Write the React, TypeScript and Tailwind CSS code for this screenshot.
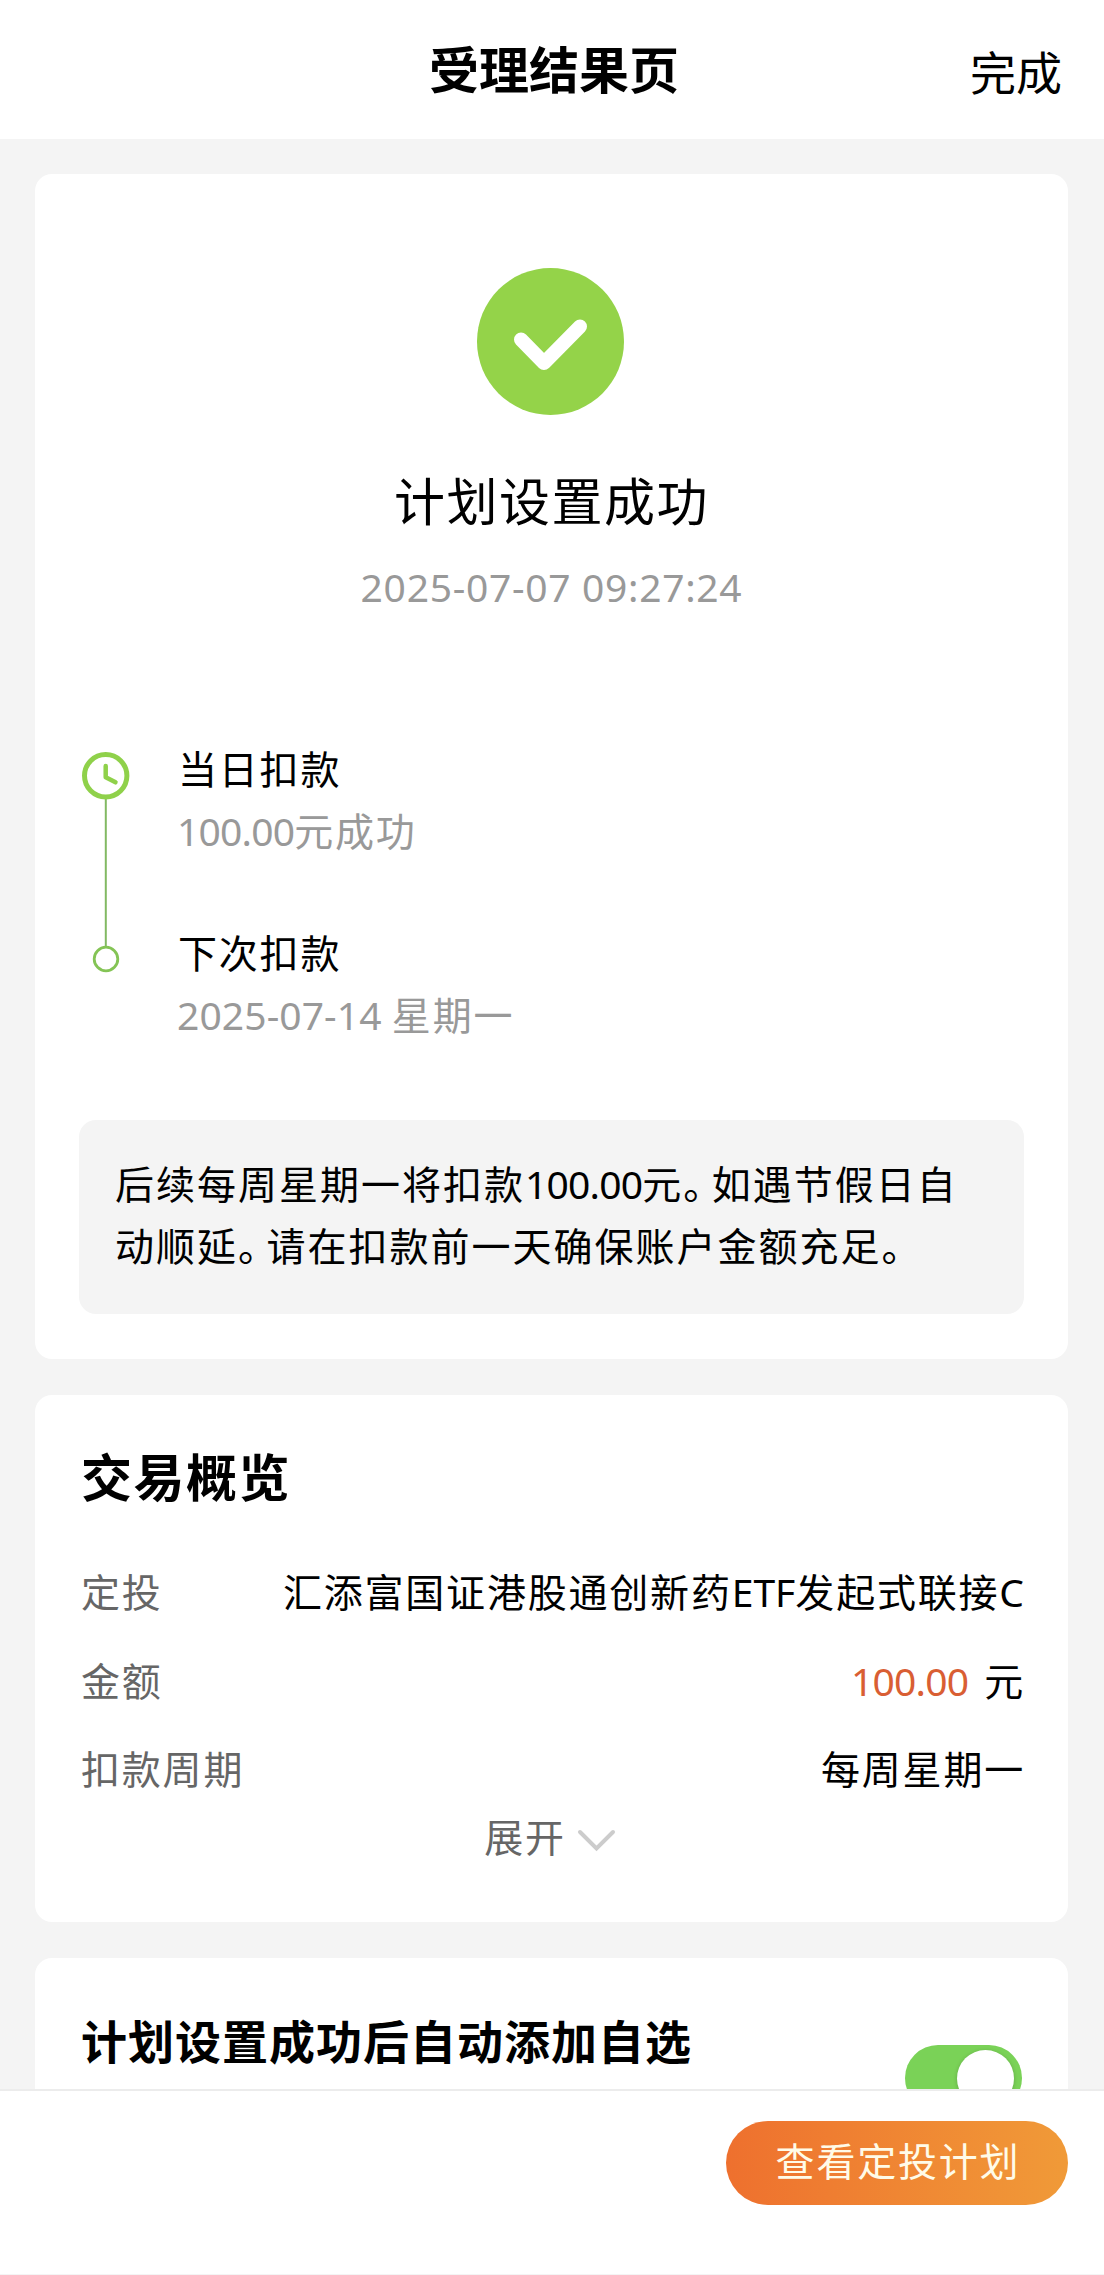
import type { ReactNode } from "react";

const STEPS = [
  { title: "当日扣款", value: "100.00", unit: "元成功", valueClass: "tracking-[-0.8px]" },
  { title: "下次扣款", value: "2025-07-14 ", unit: "星期一", valueClass: "tracking-[0.1px]" },
] as const;

function Card({ className, children }: { className: string; children: ReactNode }) {
  return <section className={`mx-[35px] w-[1033px] shrink-0 rounded-[17px] bg-white ${className}`}>{children}</section>;
}

function Row({ label, children }: { label: string; children: ReactNode }) {
  return (
    <div className="flex h-[88.5px] items-center justify-between whitespace-nowrap">
      <span className="text-[#666]">{label}</span>
      <span className="-mr-[3px]">{children}</span>
    </div>
  );
}

// Full stop set tighter than a full em
function Stop() {
  return <span className="tracking-[-10.5px]">。</span>;
}

export default function App() {
  return (
    <div className="flex h-[2275px] w-[1104px] flex-col overflow-hidden bg-[#f4f4f4] font-['Noto_Sans','Noto_Sans_CJK_SC',sans-serif] text-[39px] leading-[62px] tracking-[1.8px] text-black">
      <header className="grid h-[139px] shrink-0 grid-cols-[1fr_auto_1fr] items-center bg-white pr-[42px]">
        <span />
        <h1 className="ml-[46px] text-[50px] font-bold tracking-normal">受理结果页</h1>
        <button className="mt-1 justify-self-end text-[46px] tracking-normal">完成</button>
      </header>

      <main className="flex h-[1950px] shrink-0 flex-col gap-9 overflow-hidden pt-[35px]">
        <Card className="h-[1185px] px-11 pt-[94px]">
          <div className="flex flex-col items-center">
            <svg className="-ml-0.5 h-[147px] w-[147px]" viewBox="0 0 147 147" fill="none">
              <circle cx="73.5" cy="73.5" r="73.5" fill="#94d349" />
              <path d="M44 71.5 67 95 103 58.5" stroke="white" strokeWidth="14" strokeLinecap="round" strokeLinejoin="round" />
            </svg>
            <h2 className="mt-[55px] text-[51px] tracking-[1.5px]">计划设置成功</h2>
            <time className="mt-6 mb-px text-[#999] tracking-[0.7px]">2025-07-07 09:27:24</time>
          </div>

          <div className="mt-[119px] flex">
            <svg className="mt-3.5 ml-[3px] h-[221px] w-12 shrink-0" viewBox="0 0 48 221" fill="none">
              <path d="M23.8 47V195" stroke="#82b963" strokeWidth="2" />
              <circle cx="23.7" cy="23.7" r="21.2" stroke="#8fd14a" strokeWidth="5" />
              <path d="M23.7 14V25.2L33.5 30.3" stroke="#8fd14a" strokeWidth="4.5" strokeLinecap="round" strokeLinejoin="round" />
              <circle cx="24" cy="207" r="11.8" stroke="#84c455" strokeWidth="2.8" />
            </svg>
            <div className="ml-12 flex flex-col gap-[60px]">
              {STEPS.map(({ title, value, unit, valueClass }) => (
                <div key={title}>
                  <h3>{title}</h3>
                  <p className="-ml-px whitespace-pre text-[#999]">
                    <span className={valueClass}>{value}</span>
                    {unit}
                  </p>
                </div>
              ))}
            </div>
          </div>

          <p className="mt-[74px] h-[194px] w-[945px] rounded-[17px] bg-[#f4f4f4] pt-[33px] pl-9 tracking-[2px] whitespace-nowrap">
            后续每周星期一将扣款<span className="tracking-[-0.8px]">100.00</span>元<Stop />如遇节假日自
            <br />
            动顺延<Stop />请在扣款前一天确保账户金额充足<Stop />
          </p>
        </Card>

        <Card className="h-[527px] px-[46px] pt-[51px]">
          <h2 className="text-[51px] font-bold tracking-[1.5px]">交易概览</h2>
          <div className="mt-10">
            <Row label="定投">
              汇添富国证港股通创新药<span className="tracking-normal">ETF</span>发起式联接<span className="tracking-[1px]">C</span>
            </Row>
            <Row label="金额">
              <span className="mr-4 text-[#d95e33] tracking-[-0.8px]">100.00</span>元
            </Row>
            <Row label="扣款周期">每周星期一</Row>
          </div>
          <button className="mx-auto -mt-2 flex items-center text-[#666]">
            展开
            <svg className="mt-2 mr-0.5 ml-[11px] h-6 w-10" viewBox="0 0 40 24" fill="none" stroke="#ccc" strokeWidth="4" strokeLinecap="round">
              <path d="M3 3 19.5 19.5 36 3" />
            </svg>
          </button>
        </Card>

        <Card className="flex h-[240px] items-start justify-between pr-[46px] pl-[46px]">
          <h2 className="mt-[52px] text-[46px] font-bold tracking-[1px]">计划设置成功后自动添加自选</h2>
          <span className="mt-[87px] flex h-[66px] w-[117px] items-center justify-end rounded-full bg-[#7ad257] pr-2">
            <span className="h-[57px] w-[57px] rounded-full bg-white shadow-[0_1px_4px_rgba(0,0,0,0.2)]" />
          </span>
        </Card>
      </main>

      <footer className="flex h-[186px] shrink-0 items-start justify-end border-t-2 border-b border-t-[#ececec] border-b-[#f4f4f4] bg-white pt-[30px] pr-9">
        <button className="flex h-[84px] w-[342px] items-center justify-center rounded-full bg-linear-to-r from-[#ee702e] to-[#f09a38] pb-1 pl-0.5 text-[#fffbe8]">
          查看定投计划
        </button>
      </footer>
    </div>
  );
}
